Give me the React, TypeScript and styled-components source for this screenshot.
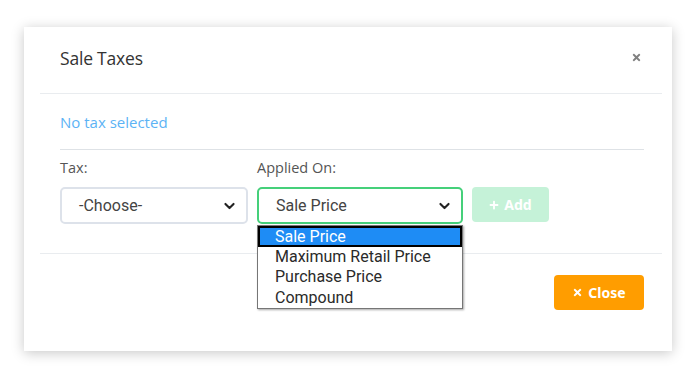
import styled, { createGlobalStyle } from 'styled-components';
import { FaPlus, FaTimes } from 'react-icons/fa';

const GlobalStyle = createGlobalStyle`
  html, body {
    margin: 0;
    padding: 0;
    background: #ffffff;
  }
  body {
    font-family: 'Open Sans', 'Liberation Sans', sans-serif;
    width: 700px;
    height: 380px;
    overflow: hidden;
  }
  * { box-sizing: border-box; }
`;

const Page = styled.div`
  padding: 27px 0 0 24px;
`;

const Modal = styled.section`
  width: 648px;
  height: 324px;
  background: #ffffff;
  box-shadow: 0 2px 12px rgba(0, 0, 0, 0.22);
  padding: 0 10px 0 16px;
  display: flex;
  flex-direction: column;
`;

const Header = styled.header`
  height: 67px;
  display: flex;
  align-items: center;
  justify-content: space-between;
  padding: 0 20px 5px 20px;
  border-bottom: 1px solid #e9ecef;
`;

const Title = styled.h1`
  margin: 0;
  font-size: 17.5px;
  font-weight: 400;
  color: #333;
  letter-spacing: -0.2px;
`;

const HeaderClose = styled.button`
  border: 0;
  background: none;
  padding: 0;
  color: #808080;
  display: flex;
  align-items: center;
  cursor: pointer;
`;

const Body = styled.div`
  padding: 0 18px 0 20px;
  height: 160px;
  border-bottom: 1px solid #e9ecef;
`;

const Status = styled.div`
  height: 56px;
  display: flex;
  align-items: center;
  font-size: 15px;
  color: #5cb3f5;
  border-bottom: 1px solid #dee2e6;
`;

const FormRow = styled.div`
  display: flex;
  align-items: flex-end;
  gap: 9px;
  padding-top: 6px;
`;

const Field = styled.div<{ $width: number }>`
  width: ${({ $width }) => $width}px;
  display: flex;
  flex-direction: column;
  position: relative;
`;

const Label = styled.label`
  font-size: 14.5px;
  color: #555;
  height: 25px;
  line-height: 24px;
  margin-bottom: 6px;
`;

const SelectBox = styled.div<{ $focused?: boolean }>`
  height: 37px;
  border: ${({ $focused }) => ($focused ? '2px solid #45d07a' : '2px solid #dde2ea')};
  border-radius: 5px;
  display: flex;
  align-items: center;
  justify-content: space-between;
  padding: 0 10px 0 17px;
  font-family: Roboto, 'Liberation Sans', sans-serif;
  font-size: 16px;
  color: #444;
  background: #fff;
`;

const Chevron = () => (
  <svg width="13" height="10" viewBox="0 0 16 12">
    <path d="M3 3.5l5 5 5-5" fill="none" stroke="#222" strokeWidth="2.6" strokeLinecap="round" strokeLinejoin="round" />
  </svg>
);

const OptionList = styled.ul`
  position: absolute;
  top: 100%;
  left: 0;
  width: 206px;
  margin: 1px 0 0;
  padding: 0;
  list-style: none;
  background: #fff;
  border: 1px solid #767676;
  box-shadow: 1px 1px 2px rgba(0, 0, 0, 0.35);
  z-index: 10;
`;

const OptionItem = styled.li<{ $active?: boolean }>`
  height: 20.6px;
  line-height: ${({ $active }) => ($active ? '17px' : '20px')};
  padding-left: ${({ $active }) => ($active ? '15px' : '17px')};
  font-family: Roboto, 'Liberation Sans', sans-serif;
  font-size: 16px;
  color: ${({ $active }) => ($active ? '#fff' : '#2a2a2a')};
  background: ${({ $active }) => ($active ? '#1e8cf5' : '#fff')};
  border: ${({ $active }) => ($active ? '2px solid #000' : '0')};
`;

const AddButton = styled.button`
  width: 77px;
  height: 35px;
  margin-bottom: 2px;
  border: 0;
  border-radius: 4px;
  background: #c5f2d8;
  color: #fff;
  font-family: 'Noto Sans', 'Liberation Sans', sans-serif;
  font-weight: 700;
  font-size: 14px;
  display: flex;
  align-items: center;
  justify-content: center;
  gap: 5px;
`;

const Footer = styled.footer`
  flex: 1;
  display: flex;
  justify-content: flex-end;
  align-items: flex-start;
  padding: 21px 18px 0 0;
`;

const CloseButton = styled.button`
  width: 90px;
  height: 35px;
  border: 0;
  border-radius: 4px;
  background: #ff9d00;
  color: #fff;
  font-family: 'Noto Sans', 'Liberation Sans', sans-serif;
  font-weight: 700;
  font-size: 14px;
  display: flex;
  align-items: center;
  justify-content: center;
  gap: 5px;
`;

const options = ['Sale Price', 'Maximum Retail Price', 'Purchase Price', 'Compound'];

export default function App() {
  return (
    <Page>
      <GlobalStyle />
      <Modal>
        <Header>
          <Title>Sale Taxes</Title>
          <HeaderClose aria-label="close">
            <FaTimes size={11} />
          </HeaderClose>
        </Header>
        <Body>
          <Status>No tax selected</Status>
          <FormRow>
            <Field $width={188}>
              <Label>Tax:</Label>
              <SelectBox>
                <span>-Choose-</span>
                <Chevron />
              </SelectBox>
            </Field>
            <Field $width={206}>
              <Label>Applied On:</Label>
              <SelectBox $focused>
                <span>Sale Price</span>
                <Chevron />
              </SelectBox>
              <OptionList role="listbox">
                {options.map((o, i) => (
                  <OptionItem key={o} $active={i === 0}>
                    {o}
                  </OptionItem>
                ))}
              </OptionList>
            </Field>
            <AddButton>
              <FaPlus size={10} /> Add
            </AddButton>
          </FormRow>
        </Body>
        <Footer>
          <CloseButton>
            <FaTimes size={11} /> Close
          </CloseButton>
        </Footer>
      </Modal>
    </Page>
  );
}
